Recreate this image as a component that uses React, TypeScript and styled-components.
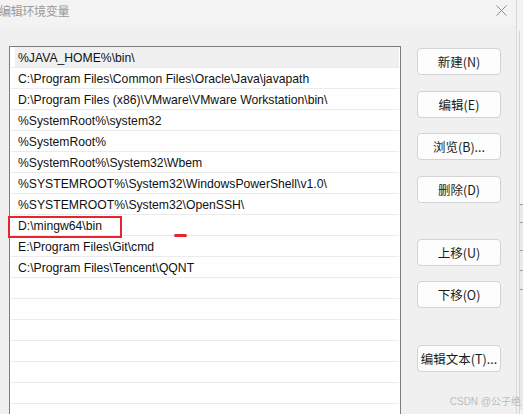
import React from 'react';
import styled, { createGlobalStyle } from 'styled-components';

const GlobalStyle = createGlobalStyle`
  html, body {
    margin: 0;
    padding: 0;
    width: 523px;
    height: 414px;
    overflow: hidden;
    background: #f0f0f0;
  }
`;

const Screen = styled.div`
  position: relative;
  display: flex;
  width: 523px;
  height: 414px;
  overflow: hidden;
  font-family: "Liberation Sans", "Noto Sans CJK SC", sans-serif;
`;

const Dialog = styled.div`
  display: flex;
  flex-direction: column;
  width: 516px;
  flex-shrink: 0;
  background: #f0f0f0;
  border-right: 1px solid #d9d9d9;
`;

const TitleBar = styled.div`
  display: flex;
  align-items: center;
  justify-content: space-between;
  flex-shrink: 0;
  height: 25px;
  padding: 0 9px 4px 0;
  box-sizing: border-box;
  background: #f3f3f3;
`;

const Title = styled.span`
  margin-left: -1px;
  font-family: "Noto Sans CJK SC", sans-serif;
  font-size: 12px;
  color: #9a9a9a;
  letter-spacing: -0.3px;
`;

const CloseIcon = styled.svg`
  width: 11px;
  height: 11px;
`;

const Body = styled.div`
  display: flex;
  flex: 1;
  min-height: 0;
  padding: 21px 0 0 9px;
`;

const ListBox = styled.div`
  width: 392px;
  height: 380px;
  flex-shrink: 0;
  box-sizing: border-box;
  border: 1px solid #7b7b80;
  border-bottom: none;
  background: #fff;
  padding: 0 1px;
`;

const Row = styled.div`
  position: relative;
  height: 21px;
  box-sizing: border-box;
  border-bottom: 1px solid #ebebeb;
  display: flex;
  align-items: center;
  padding-left: 4px;
`;

const RowLabel = styled.span<{ $selected?: boolean }>`
  flex: 1;
  align-self: stretch;
  display: flex;
  align-items: center;
  padding: 2px 0 0 3px;
  background: ${({ $selected }) => ($selected ? '#f0f0f0' : 'transparent')};
  font-size: 12.2px;
  color: #111;
  white-space: nowrap;
`;

const Highlight = styled.div`
  position: absolute;
  left: -3px;
  top: 1px;
  width: 114px;
  height: 22px;
  box-sizing: border-box;
  border: 2px solid #e5262e;
  pointer-events: none;
`;

const Dash = styled.div`
  position: absolute;
  left: 163px;
  top: 19px;
  width: 13px;
  height: 3px;
  border-radius: 2px;
  background: #e5262e;
`;

const ButtonColumn = styled.div`
  display: flex;
  flex-direction: column;
  margin-left: 16px;
  padding-top: 2px;
`;

const Button = styled.button<{ $gap: number }>`
  width: 84px;
  height: 27px;
  flex-shrink: 0;
  margin-top: ${({ $gap }) => $gap}px;
  padding: 0;
  box-sizing: border-box;
  border: 1px solid #d3d3d3;
  border-radius: 4px;
  background: #fdfdfd;
  font-family: "Noto Sans CJK SC", sans-serif;
  font-size: 12.5px;
  color: #1b1b1b;
  white-space: nowrap;
`;

const BackWindow = styled.div`
  display: flex;
  flex-direction: column;
  flex: 1;
  padding-top: 31px;
  background: #f3f3f3;
`;

const BackPanel = styled.div`
  flex: 1;
  margin-left: 2px;
  border-left: 1px solid #d4d4d4;
  display: flex;
  flex-direction: column;
  padding-top: 173px;
`;

const BackLine = styled.div<{ $h: number }>`
  height: ${({ $h }) => $h}px;
  flex-shrink: 0;
  border-top: 1px solid #9a9aa0;
  background: #e9e9e9;
`;

const Watermark = styled.div`
  position: absolute;
  right: 2px;
  bottom: 6px;
  font-family: "Liberation Sans", "Noto Sans CJK SC", sans-serif;
  font-size: 10px;
  color: #bdbdbd;
`;

const paths = [
  '%JAVA_HOME%\\bin\\',
  'C:\\Program Files\\Common Files\\Oracle\\Java\\javapath',
  'D:\\Program Files (x86)\\VMware\\VMware Workstation\\bin\\',
  '%SystemRoot%\\system32',
  '%SystemRoot%',
  '%SystemRoot%\\System32\\Wbem',
  '%SYSTEMROOT%\\System32\\WindowsPowerShell\\v1.0\\',
  '%SYSTEMROOT%\\System32\\OpenSSH\\',
  'D:\\mingw64\\bin',
  'E:\\Program Files\\Git\\cmd',
  'C:\\Program Files\\Tencent\\QQNT',
];

const rows = [...paths, ...Array(8).fill('')];

const buttons = [
  { label: '新建(N)', gap: 0 },
  { label: '编辑(E)', gap: 16 },
  { label: '浏览(B)...', gap: 15 },
  { label: '删除(D)', gap: 16 },
  { label: '上移(U)', gap: 36 },
  { label: '下移(O)', gap: 15 },
  { label: '编辑文本(T)...', gap: 37 },
];

const App: React.FC = () => (
  <>
    <GlobalStyle />
    <Screen>
      <Dialog>
        <TitleBar>
          <Title>编辑环境变量</Title>
          <CloseIcon viewBox="0 0 11 11">
            <path d="M0.5 0.5 L10.5 10.5 M10.5 0.5 L0.5 10.5" stroke="#8a8a8a" strokeWidth="1" fill="none" />
          </CloseIcon>
        </TitleBar>
        <Body>
          <ListBox>
            {rows.map((text, i) => (
              <Row key={i}>
                <RowLabel $selected={i === 0}>{text}</RowLabel>
                {text === 'D:\\mingw64\\bin' && (
                  <>
                    <Highlight />
                    <Dash />
                  </>
                )}
              </Row>
            ))}
          </ListBox>
          <ButtonColumn>
            {buttons.map((b) => (
              <Button key={b.label} $gap={b.gap}>
                {b.label}
              </Button>
            ))}
          </ButtonColumn>
        </Body>
      </Dialog>
      <BackWindow>
        <BackPanel>
          <BackLine $h={17} />
          <BackLine $h={27} />
          <BackLine $h={19} />
          <BackLine $h={18} />
          <BackLine $h={120} />
        </BackPanel>
      </BackWindow>
      <Watermark>CSDN @公子绝</Watermark>
    </Screen>
  </>
);

export default App;
